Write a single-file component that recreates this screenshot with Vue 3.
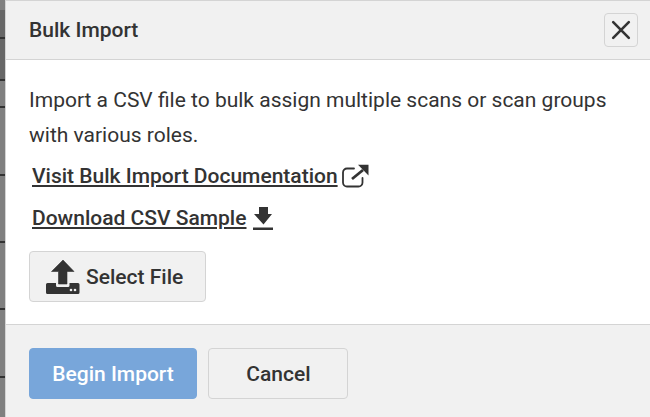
<script setup>
const backdropLines = [37, 79, 106, 174, 241, 308, 376];
</script>

<template>
  <div class="page">
    <div class="backdrop">
      <div class="backdrop-dark"></div>
      <div v-for="y in backdropLines" :key="y" class="backdrop-line" :style="{ top: y + 'px' }"></div>
    </div>
    <div class="modal">
      <div class="modal-header">
        <h4>Bulk Import</h4>
        <button type="button" class="close-button" aria-label="Close">
          <svg width="20" height="20" viewBox="0 0 20 20">
            <path d="M2.2 2.2 L17.8 17.8 M17.8 2.2 L2.2 17.8" stroke="#333" stroke-width="2.6" stroke-linecap="round" fill="none" />
          </svg>
        </button>
      </div>
      <div class="modal-body">
        <p class="intro">Import a CSV file to bulk assign multiple scans or scan groups with various roles.</p>
        <div class="link-row docs-row">
          <a href="#">Visit Bulk Import Documentation</a>
          <svg class="icon" width="27" height="24" viewBox="0 0 27 24">
            <path d="M12 4.5 H5 a4 4 0 0 0 -4 4 V18.5 a4 4 0 0 0 4 4 H16.5 a4 4 0 0 0 4 -4 V14" stroke="#333" stroke-width="1.8" fill="none" stroke-linecap="round" />
            <path d="M10 15 L21 6" stroke="#333" stroke-width="2.8" fill="none" />
            <path d="M16 0.7 H26.5 V11.5 Z" fill="#333" />
          </svg>
        </div>
        <div class="link-row sample-row">
          <a href="#">Download CSV Sample</a>
          <svg class="icon" width="20" height="24" viewBox="0 0 20 24">
            <path d="M6 1 H15 V8 H19 L10.5 18.5 L1 8 H6 Z" fill="#333" />
            <rect x="0" y="21.5" width="20" height="2.5" fill="#333" />
          </svg>
        </div>
        <button type="button" class="select-button">
          <svg width="34" height="34" viewBox="0 0 34 34">
            <path d="M17 0 L28 11.5 H21 V24 H12.5 V11.5 H5.5 Z" fill="#333" stroke="#333" stroke-width="0.6" stroke-linejoin="round" />
            <path d="M1.5 23 H10 V25.5 a1.5 1.5 0 0 0 1.5 1.5 H22 a1.5 1.5 0 0 0 1.5 -1.5 V23 H32 a1.5 1.5 0 0 1 1.5 1.5 V32.5 a1.5 1.5 0 0 1 -1.5 1.5 H1.5 a1.5 1.5 0 0 1 -1.5 -1.5 V24.5 a1.5 1.5 0 0 1 1.5 -1.5 Z" fill="#333" />
            <circle cx="25" cy="30" r="1.3" fill="#f1f1f1" />
            <circle cx="29" cy="30" r="1.3" fill="#f1f1f1" />
          </svg>
          <span>Select File</span>
        </button>
      </div>
      <div class="modal-footer">
        <button type="button" class="primary-button">Begin Import</button>
        <button type="button" class="cancel-button">Cancel</button>
      </div>
    </div>
  </div>
</template>

<style>
html, body { margin: 0; padding: 0; }
</style>

<style scoped>
.page {
  position: relative;
  width: 650px;
  height: 417px;
  overflow: hidden;
  padding-left: 5px;
  box-sizing: border-box;
  background: #808080;
  font-family: Roboto, "Liberation Sans", sans-serif;
  color: #333;
}
.backdrop { position: absolute; left: 0; top: 0; width: 5px; height: 417px; }
.backdrop-dark { position: absolute; left: 0; top: 10px; width: 5px; height: 70px; background: #676767; }
.backdrop-line { position: absolute; left: 0; width: 5px; height: 2px; background: #333; }
.modal {
  display: flex;
  flex-direction: column;
  height: 417px;
  box-sizing: border-box;
  background: #fff;
  border-left: 1px solid #d4d4d4;
  border-top: 1px solid #d4d4d4;
}
.modal-header {
  display: flex;
  align-items: center;
  justify-content: space-between;
  height: 59px;
  box-sizing: border-box;
  padding: 0 12px 0 23px;
  background: #f1f1f1;
  border-bottom: 1px solid #d4d4d4;
}
h4 { margin: 0; font-size: 21px; font-weight: 500; color: #333; }
.close-button {
  display: flex;
  align-items: center;
  justify-content: center;
  width: 34px;
  height: 34px;
  padding: 0;
  background: #f1f1f1;
  border: 1px solid #d4d4d4;
  border-radius: 4px;
}
.modal-body { flex: 1; padding: 23px 23px 0; }
.intro { margin: 0; font-size: 21px; line-height: 35px; color: #333; }
.link-row { display: flex; align-items: center; gap: 4px; padding-left: 3px; }
.docs-row { margin-top: 8px; height: 30px; }
.sample-row { margin-top: 12px; height: 30px; gap: 7px; }
.link-row a { font-size: 21px; font-weight: 500; color: #333; text-decoration: underline; }
.select-button {
  display: flex;
  align-items: center;
  gap: 6px;
  width: 177px;
  height: 51px;
  margin-top: 18px;
  padding: 0 0 0 16px;
  background: #f1f1f1;
  border: 1px solid #d4d4d4;
  border-radius: 4px;
  font: 500 21px Roboto, "Liberation Sans", sans-serif;
  color: #333;
}
.modal-footer {
  display: flex;
  gap: 11px;
  height: 93px;
  box-sizing: border-box;
  padding: 23px 23px 0;
  background: #f1f1f1;
  border-top: 1px solid #d4d4d4;
}
.primary-button, .cancel-button {
  height: 51px;
  padding: 0;
  border-radius: 4px;
  font: 500 21px Roboto, "Liberation Sans", sans-serif;
}
.primary-button { width: 168px; background: #78a6da; border: 1px solid #78a6da; color: #fff; }
.cancel-button { width: 140px; padding-left: 1px; background: #f1f1f1; border: 1px solid #d4d4d4; color: #333; }
</style>
